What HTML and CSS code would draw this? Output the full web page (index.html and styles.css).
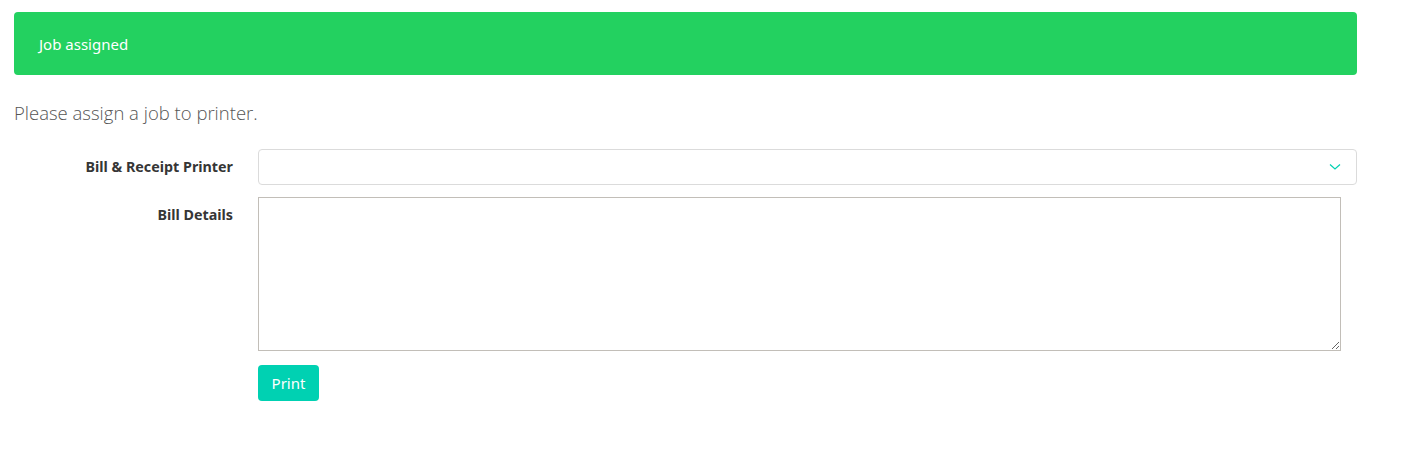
FILE: index.html
```html
<!DOCTYPE html>
<html>
<head>
<meta charset="utf-8">
<link rel="stylesheet" href="styles.css">
</head>
<body>
<div class="page">
  <div class="notification">Job assigned</div>
  <p class="intro">Please assign a job to printer.</p>
  <form class="form">
    <div class="field">
      <div class="label-col"><label class="label">Bill &amp; Receipt Printer</label></div>
      <div class="control-col">
        <div class="select">
          <select></select>
          <svg class="arrow" width="12" height="8" viewBox="0 0 12 8"><path d="M1 1.5 L6 6 L11 1.5" fill="none" stroke="#00d1b2" stroke-width="1.2"/></svg>
        </div>
      </div>
    </div>
    <div class="field">
      <div class="label-col"><label class="label">Bill Details</label></div>
      <div class="control-col">
        <textarea class="textarea"></textarea>
      </div>
    </div>
    <div class="field">
      <div class="label-col"></div>
      <div class="control-col">
        <button type="button" class="button">Print</button>
      </div>
    </div>
  </form>
</div>
</body>
</html>
```
FILE: styles.css
```css
* { box-sizing: border-box; }
html, body { margin: 0; padding: 0; background: #fff; }
body { font-family: "Noto Sans", "Open Sans", sans-serif; color: #4a4a4a; }
.page { width: 1343px; margin-left: 14px; padding-top: 12px; }
.notification {
  background: #23d160;
  color: #fff;
  border-radius: 4px;
  height: 63px;
  padding: 0 24px 0 25px;
  display: flex;
  align-items: center;
  font-size: 15px;
}
.intro {
  margin: 25px 0 0 0;
  font-family: "Open Sans", sans-serif;
  font-weight: 300;
  font-size: 18.5px;
  line-height: 26px;
  color: #555;
}
.form { margin-top: 23px; }
.field { display: flex; margin-bottom: 12px; }
.label-col { width: 219px; flex: none; text-align: right; }
.control-col { flex: 1; margin-left: 25px; }
.label {
  display: block;
  font-weight: 700;
  font-size: 14.3px;
  color: #363636;
  line-height: 36px;
}
.field:nth-child(2) .label { line-height: 20px; margin-top: 8px; }
.select { position: relative; height: 36px; }
.select select {
  width: 100%;
  height: 36px;
  border: 1px solid #dbdbdb;
  border-radius: 4px;
  background: #fff;
  appearance: none;
  -webkit-appearance: none;
  display: block;
}
.arrow { position: absolute; right: 16px; top: 14px; }
.textarea {
  display: block;
  width: 1083px;
  height: 154px;
  border: 1px solid #c2beb8;
  border-radius: 0;
  margin: 0;
  resize: both;
  font-family: inherit;
}
.field:nth-child(3) { margin-top: 14px; }
.button {
  background: #00d1b2;
  color: #fff;
  border: none;
  border-radius: 4px;
  height: 36px;
  width: 61px;
  font-family: "Noto Sans", sans-serif;
  font-size: 15px;
  padding: 0;
}
```
